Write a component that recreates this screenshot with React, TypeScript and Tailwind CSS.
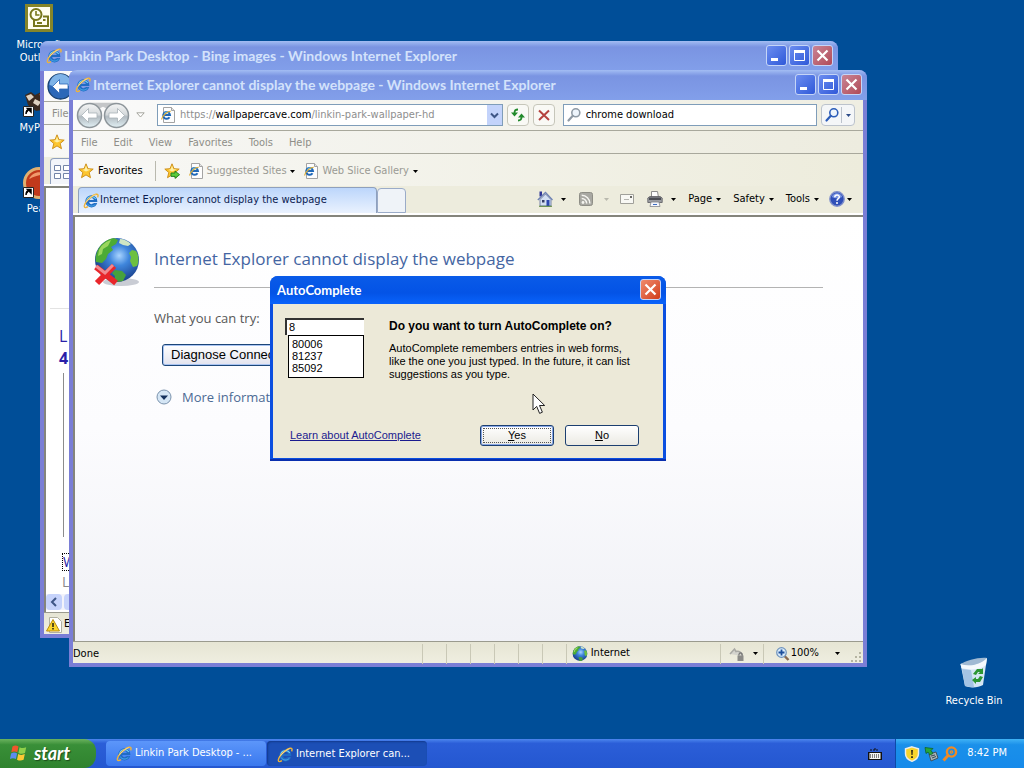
import React from "react";

const TAHOMA = "font-['DejaVu_Sans_Condensed','DejaVu_Sans',sans-serif]";
const TREBUCHET = "font-['Lato',sans-serif]";
const SANS = "font-['Liberation_Sans',sans-serif]";
const SEGOE = "font-['Open_Sans',sans-serif]";

const IeIcon: React.FC<{ className?: string }> = ({ className = "size-4" }) => (
  <svg viewBox="0 0 16 16" className={`shrink-0 ${className}`}>
    <path
      d="M8.400 2.200a6 6 0 0 1 6 6.800H6.200c.3 1.500 1.100 2.200 2.400 2.200 1 0 1.700-.4 2.100-1.200h3.500c-.8 2.800-2.800 4.400-5.800 4.400a6.100 6.100 0 1 1 0-12.200zM6.200 7h4.600c-.2-1.300-1-2-2.300-2S6.400 5.700 6.200 7z"
      fill="#1f6cc4"
      fillRule="evenodd"
    />
    <path d="M3.600 8a5 5 0 0 1 9.200-2" fill="none" stroke="#74d0f7" strokeWidth="1.100" />
    <path d="M4.200 10.500c1.500 3.200 6 3.400 8.200.7" fill="none" stroke="#4fb4ee" strokeWidth=".9" />
    <path
      d="M14.600 4.400c1-2.300.3-3.500-1.600-3.100C10 2 5 6 2.700 9.600 1 12.300.8 14.400 2.400 14.600c.7.100 1.600-.3 2.500-.9"
      fill="none"
      stroke="#eeb33a"
      strokeWidth="1.400"
    />
    <path d="M12.600 1.700C9.500 2.600 5.200 6.200 3 9.400" fill="none" stroke="#fff0b8" strokeWidth=".6" />
  </svg>
);

const PageIcon: React.FC = () => (
  <svg viewBox="0 0 16 16" className="size-4 shrink-0" fill="none">
    <path d="M3.500.5h8l3 3v12h-11z" fill="#fdfdfd" stroke="#a3a3a3" />
    <path d="M11.500.5v3h3" fill="#e4e4e4" stroke="#a3a3a3" />
    <path d="M9.500 10.200A3.400 3.400 0 1 1 10 8H4" stroke="#1f68b8" strokeWidth="2" />
    <path d="M4 6.700a3.500 3.500 0 0 1 4.500-1.500" stroke="#74d0f7" strokeWidth=".9" />
    <path d="M10.800 4.200C8 4 2.800 7.800 1.500 12.500" stroke="#dfb03a" strokeWidth="1.100" />
  </svg>
);

const StarIcon: React.FC<{ arrow?: boolean }> = ({ arrow }) => (
  <svg viewBox="0 0 16 16" className="size-4 shrink-0">
    <path
      d="M8 .8l2 4.900 5.200.4-4 3.400 1.300 5.200L8 11.900l-4.500 2.800 1.300-5.200-4-3.400L6 5.700z"
      fill="#fdc62f"
      stroke="#c98a13"
      strokeWidth=".9"
      strokeLinejoin="round"
    />
    <path d="M8 2.500l1.300 3.800 3.500.3L8 8.500 4.500 6.800l2.200-.5z" fill="#fff0a3" />
    {arrow && (
      <path d="M7 10h4V8l4.600 3.700L11 15.400v-2H7z" fill="#5ccb3b" stroke="#187a1c" strokeWidth=".9" />
    )}
  </svg>
);

const Caret: React.FC<{ className?: string }> = ({ className = "text-black" }) => (
  <svg viewBox="0 0 5 3" className={`h-[3px] w-[5px] shrink-0 ${className}`}>
    <path d="M0 0h5L2.500 3z" fill="currentColor" />
  </svg>
);

const HomeIcon: React.FC = () => (
  <svg viewBox="0 0 16 16" className="size-4">
    <path d="M2.500.5h2.500v5H2.500z" fill="#2f3596" />
    <path d="M3 8.500L8.500 3l5.500 5.500V15H3z" fill="#d3dff2" stroke="#5a6a9c" strokeWidth=".8" />
    <path d="M.8 9L8.500 1.500 15.500 9" fill="none" stroke="#6f83b4" strokeWidth="1.300" />
    <path d="M5 9h2.500v2.500H5z" fill="#333c66" />
    <path d="M9.500 9h3v6h-3z" fill="#2c48b0" />
    <path d="M2 15.300h13" stroke="#5c8a3a" />
  </svg>
);

const RssIcon: React.FC = () => (
  <svg viewBox="0 0 16 16" className="size-4" fill="none">
    <rect x="1.500" y="1.500" width="13" height="13" rx="2" fill="#a8a8a2" stroke="#8e8e86" />
    <circle cx="5" cy="11.500" r="1.400" fill="#f5f5f0" />
    <path d="M3.700 7.500a5 5 0 0 1 5 5M3.700 4.300a8.200 8.200 0 0 1 8.200 8.200" stroke="#f5f5f0" strokeWidth="1.500" />
  </svg>
);

const MailIcon: React.FC = () => (
  <svg viewBox="0 0 16 16" className="size-4" fill="none">
    <path d="M1.500 3.500h13v9h-13z" fill="#f8f8f4" stroke="#a0a09a" />
    <path d="M5 8.500h5" stroke="#b5b5b0" />
    <path d="M11 5h2v2h-2z" fill="#6a6a66" />
  </svg>
);

const PrinterIcon: React.FC = () => (
  <svg viewBox="0 0 16 16" className="size-4">
    <path d="M4.500.5h6l1 6h-7z" fill="#fdfdfd" stroke="#8d8d8d" />
    <path d="M.8 7l2-1.500h10.400l2 1.500v4.500H.8z" fill="#9c9ea3" stroke="#5a5b60" strokeWidth=".8" />
    <path d="M2 6.500h12v2.500H2z" fill="#4b4d54" />
    <path d="M4 11h8l1 4.500H3z" fill="#f4f6fb" stroke="#84868c" strokeWidth=".8" />
    <path d="M6 13.500h4" stroke="#3f6fc4" strokeWidth="1.200" />
  </svg>
);

const HelpIcon: React.FC = () => (
  <svg viewBox="0 0 16 16" className="size-4" fill="none">
    <circle cx="8" cy="8" r="7.200" fill="#2f4fb8" stroke="#7f8fcb" strokeWidth="1.400" />
    <path d="M2.800 6a5.500 5.500 0 0 1 10.400 0C10 7.800 6 7.800 2.800 6z" fill="#7b96e2" />
    <path d="M5.800 6.200c0-3 4.500-2.800 4.500-.3C10.300 7.700 8 7.600 8 9.700" stroke="#fff" strokeWidth="1.500" />
    <circle cx="8" cy="12" r="1" fill="#fff" />
  </svg>
);

const MagnifierIcon: React.FC<{ className: string }> = ({ className }) => (
  <svg viewBox="0 0 16 16" className={`size-4 shrink-0 ${className}`} fill="none">
    <circle cx="9.800" cy="5.800" r="4" fill="#eef5fc" stroke="currentColor" strokeWidth="1.600" />
    <path d="M6.800 8.800L2.500 13.500" stroke="currentColor" strokeWidth="2.200" strokeLinecap="round" />
  </svg>
);

const GlobeShapes: React.FC = () => (
  <>
    <defs>
      <radialGradient id="ocean" cx=".55" cy=".4" r=".65">
        <stop offset="0" stopColor="#a9d4ff" />
        <stop offset=".35" stopColor="#3f86dc" />
        <stop offset="1" stopColor="#12347f" />
      </radialGradient>
    </defs>
    <circle cx="24" cy="23" r="22" fill="url(#ocean)" />
    <path d="M4 15C7 7 14 2 21 1l4 2-2 4-5 3 2 3-5 4-2 5-4 4-6-1c-1-4 0-7 1-10z" fill="#4cab35" />
    <path d="M6 13c3-6 8-9 12-10l-3 6-5 3-1 5-4 2z" fill="#9ad65e" />
    <path d="M27 2c4 0 8 2 11 5l-3 2-5-1-4-2z" fill="#cfe6c4" />
    <path d="M39 13l4 1c3 4 3 11 1 15l-4 1-3-6 1-4-2-4z" fill="#6cc040" />
    <path d="M22 33l7 1 4 4-3 6c-4 1-7 1-9 0l1-5-3-3z" fill="#47a13c" />
  </>
);

const BackIcon: React.FC = () => (
  <svg viewBox="0 0 27 27" className="size-[27px]">
    <circle cx="13.500" cy="13.500" r="12.500" fill="#2c68b8" stroke="#18406f" strokeWidth="1.300" />
    <path d="M2.500 12a11 11 0 0 1 22 0c-6 2-16 2-22 0z" fill="#7fb4e8" />
    <path d="M12.500 6.500L5.500 13.500l7 7v-4.500h8.500v-5h-8.500z" fill="#fff" stroke="#2c68b8" strokeWidth=".8" />
  </svg>
);

const TravelCircle: React.FC<{ flip?: boolean }> = ({ flip }) => (
  <svg viewBox="0 0 27 27" className={`size-[27px] ${flip ? "-scale-x-100" : ""}`}>
    <defs>
      <linearGradient id="glass" x1="0" y1="0" x2="0" y2="1">
        <stop offset="0" stopColor="#f4f5f5" />
        <stop offset=".45" stopColor="#d6dadc" />
        <stop offset=".55" stopColor="#b2bbc1" />
        <stop offset="1" stopColor="#e2f0f5" />
      </linearGradient>
    </defs>
    <path d="M14 .8h13v4l-4 2z" fill="#c4c6c8" />
    <circle cx="13.500" cy="13.500" r="12" fill="url(#glass)" stroke="#8d959a" strokeWidth="1.500" />
    <path
      d="M12.500 6.500L5.500 13.500l7 7v-4.500h8.500v-5h-8.500z"
      fill="#fff"
      stroke="#a9b2b7"
      strokeWidth=".8"
      strokeLinejoin="round"
    />
  </svg>
);

const captionButton =
  "flex size-[21px] items-center justify-center rounded-[3px] border border-[#c5d5f7] text-white";

const CloseButton: React.FC<{ className: string }> = ({ className }) => (
  <button type="button" aria-label="Close" className={`${captionButton} ${className}`}>
    <svg viewBox="0 0 19 19" className="size-[19px]">
      <path d="M4.500 4.500l10 10M14.500 4.500l-10 10" stroke="#fff" strokeWidth="2.200" />
    </svg>
  </button>
);

const CaptionButtons: React.FC = () => (
  <div className="flex gap-0.5">
    <button type="button" aria-label="Minimize" className={`${captionButton} bg-linear-to-br from-[#6c8df0] to-[#3058d8]`}>
      <svg viewBox="0 0 19 19" className="size-[19px]">
        <path d="M4 12h7v3H4z" fill="#fff" />
      </svg>
    </button>
    <button type="button" aria-label="Maximize" className={`${captionButton} bg-linear-to-br from-[#6c8df0] to-[#3058d8]`}>
      <svg viewBox="0 0 19 19" className="size-[19px]">
        <path d="M4.500 5v9.500h10V5" fill="none" stroke="#fff" />
        <path d="M4 4h11v3H4z" fill="#fff" />
      </svg>
    </button>
    <CloseButton className="bg-linear-to-br from-[#c98496] to-[#b04a58]" />
  </div>
);

type BrowserWindowProps = {
  title: string;
  place: string;
  menus: string[];
  toolbar: React.ReactNode;
  favorites: React.ReactNode;
  tabs: React.ReactNode;
  status: React.ReactNode;
  children: React.ReactNode;
};

const BrowserWindow: React.FC<BrowserWindowProps> = ({ title, place, menus, toolbar, favorites, tabs, status, children }) => (
  <section className={`absolute ${place} flex flex-col overflow-hidden rounded-t-lg bg-[#7a7ed6] px-1 pb-1`}>
    <header className="-mx-1 flex h-[30px] shrink-0 items-center gap-0.5 bg-linear-to-b from-[#a3bdf3] via-[#7a94e2] via-20% to-[#829fea] pr-[5px] pb-px pl-1.5">
      <IeIcon />
      <h2 className={`flex-1 truncate pt-px text-sm font-bold text-[#d3e2fb] ${TREBUCHET}`}>{title}</h2>
      <CaptionButtons />
    </header>
    <div className="flex min-h-0 flex-1 flex-col bg-[#eeeddf]">
      <div className="flex h-[31px] shrink-0 items-center border-b border-[#a8a89c] bg-linear-to-r from-[#fafafa] to-[#efeee2] pr-2 pl-[3px]">
        {toolbar}
      </div>
      <nav className="flex h-[23px] shrink-0 items-center gap-4 border-b border-[#a8a89c] bg-linear-to-r from-[#f7f7f5] to-[#edecdf] pt-[3px] pl-2 text-[#8e8e88]">
        {menus.map((m) => (
          <button type="button" key={m}>
            {m}
          </button>
        ))}
      </nav>
      <div className="flex h-8 shrink-0 items-center bg-linear-to-r from-[#f8f8f6] to-[#edecdc] pt-0.5 pl-[5px]">
        {favorites}
      </div>
      {tabs}
      <main className="relative min-h-0 flex-1 overflow-hidden border-t-2 border-l-2 border-[#85857c] bg-white">
        {children}
      </main>
      <footer className="flex h-[22px] shrink-0 items-center border-t border-[#9a9a8e] bg-linear-to-b from-[#e6e5d4] to-[#efeee0] pt-0.5">
        {status}
      </footer>
    </div>
  </section>
);

const AddressBar: React.FC = () => (
  <>
    <button type="button" aria-label="Back">
      <TravelCircle />
    </button>
    <button type="button" aria-label="Forward">
      <TravelCircle flip />
    </button>
    <svg viewBox="0 0 9 6" className="ml-1.5 h-1.5 w-[9px] shrink-0">
      <path d="M.8.8h7.400L4.500 5z" fill="#fff" stroke="#a5a59e" />
    </svg>
    <div className="ml-3 flex h-[22px] flex-[348] items-center gap-1 border border-[#7f9db9] bg-white pl-0.5">
      <PageIcon />
      <p className="flex-1 truncate pt-px text-[#8e8e8e]">
        https://<span className="text-black">wallpapercave.com</span>/linkin-park-wallpaper-hd
      </p>
      <button type="button" aria-label="Show addresses" className="flex h-full w-[15px] items-center justify-center bg-[#c3d3fb]">
        <svg viewBox="0 0 9 7" className="h-[7px] w-[9px]">
          <path d="M1 1.500l3.500 3.500L8 1.500" fill="none" stroke="#3e5686" strokeWidth="2" />
        </svg>
      </button>
    </div>
    <button type="button" aria-label="Refresh" className="ml-1 flex size-[22px] items-center justify-center rounded-sm border border-[#c6c6ba] bg-[#f9f9f5]">
      <svg viewBox="0 0 16 16" className="size-4" fill="none" stroke="#228a2c" strokeWidth="1.800">
        <path d="M8 2.500C5.500 2.500 4.500 3.500 4.500 6" />
        <path d="M8 13.500c2.500 0 3.500-1 3.500-3.500" />
        <path d="M1 5.500h7L4.500 9.500zM8 10.500h7L11.500 6.500z" fill="#228a2c" stroke="none" />
      </svg>
    </button>
    <button type="button" aria-label="Stop" className="ml-1 flex size-[22px] items-center justify-center rounded-sm border border-[#c6c6ba] bg-[#f9f9f5]">
      <svg viewBox="0 0 16 16" className="size-4">
        <path d="M3 3.500l10 9.500M13 3.500L3 13" stroke="#b5433f" strokeWidth="2" />
      </svg>
    </button>
    <label className="ml-2 flex h-[22px] flex-[255] items-center gap-1 border border-[#7f9db9] bg-white pl-0.5">
      <MagnifierIcon className="text-[#8f9aa5]" />
      <input aria-label="Search" defaultValue="chrome download" className="min-w-0 flex-1 text-black outline-none" />
    </label>
    <div className="ml-1 flex h-[22px] items-center rounded-sm border border-[#bcc3cc] bg-[#f4f6f8]">
      <button type="button" aria-label="Run search" className="flex w-5 justify-center border-r border-[#bcc3cc]">
        <MagnifierIcon className="text-[#2b5cb8]" />
      </button>
      <button type="button" aria-label="Search options" className="flex w-3 justify-center">
        <Caret className="text-[#2b4a88]" />
      </button>
    </div>
  </>
);

const FavoritesBar: React.FC = () => (
  <>
    <button type="button" className="flex items-center gap-1">
      <StarIcon />
      Favorites
    </button>
    <span className="mr-2 ml-3 h-5 w-px bg-[#b9b9ae]" />
    <button type="button" aria-label="Add to Favorites Bar">
      <StarIcon arrow />
    </button>
    <button type="button" className="ml-2 flex items-center gap-[3px] text-[#9a9a94]">
      <PageIcon />
      Suggested Sites
      <Caret />
    </button>
    <button type="button" className="ml-2 flex items-center gap-1 text-[#9a9a94]">
      <PageIcon />
      Web Slice Gallery
      <Caret />
    </button>
  </>
);

const CommandBar: React.FC = () => (
  <div className="mb-px ml-auto flex items-center self-center pr-[11px]">
    <button type="button" aria-label="Home" className="flex items-center gap-2">
      <HomeIcon />
      <Caret />
    </button>
    <button type="button" aria-label="Feeds" className="ml-3 flex items-center gap-2.5">
      <RssIcon />
      <Caret className="text-[#b9b9ae]" />
    </button>
    <button type="button" aria-label="Read mail" className="ml-2.5">
      <MailIcon />
    </button>
    <button type="button" aria-label="Print" className="ml-3 flex items-center gap-2">
      <PrinterIcon />
      <Caret />
    </button>
    {["Page", "Safety", "Tools"].map((label) => (
      <button type="button" key={label} className="ml-3 flex items-center gap-1">
        {label}
        <Caret />
      </button>
    ))}
    <button type="button" aria-label="Help" className="ml-2.5 flex items-center gap-0.5">
      <HelpIcon />
      <Caret />
    </button>
  </div>
);

const FrontTabs: React.FC = () => (
  <div className="flex h-[29px] shrink-0 items-end border-b-2 border-white bg-[#edecdd] pl-[5px]">
    <button
      type="button"
      className="flex h-[26px] w-[299px] items-center gap-px rounded-t-sm border border-b-0 border-[#8fa0bd] bg-linear-to-b from-[#bcd6fb] to-[#eaf2fe] pl-1 text-left text-[#0c1c50]"
    >
      <IeIcon />
      Internet Explorer cannot display the webpage
    </button>
    <button type="button" aria-label="New Tab" className="h-[25px] w-[29px] rounded-t-sm border border-[#9aabc8] bg-[#eff3f8]" />
    <CommandBar />
  </div>
);

const FrontStatus: React.FC = () => (
  <>
    <span className="flex-1 pt-px">Done</span>
    {[0, 1, 2, 3, 4, 5].map((i) => (
      <span key={i} className="h-5 w-6 border-l border-[#c9c8b6]" />
    ))}
    <span className="flex h-5 w-[154px] items-center gap-[3px] border-l border-[#c9c8b6] pl-[5px]">
      <svg viewBox="0 0 48 48" className="size-4">
        <GlobeShapes />
      </svg>
      Internet
    </span>
    <span className="flex h-5 w-[43px] items-center gap-2 border-l border-[#c9c8b6] pl-2">
      <svg viewBox="0 0 16 16" className="size-4" fill="none">
        <path d="M1 8l4.500-5 1.500 2.500c3-1 6 1 6.500 4.500" fill="#d4d4ce" stroke="#a9a9a4" strokeWidth="1.500" />
        <path d="M8.500 9.500h6V15h-6z" fill="#8b8b88" />
        <path d="M9.800 9.500c0-3.500 3.400-3.500 3.400 0" stroke="#777" strokeWidth="1.200" />
      </svg>
      <Caret />
    </span>
    <span className="flex h-5 items-center border-l border-[#c9c8b6] pl-[11px]">
      <svg viewBox="0 0 16 16" className="size-4" fill="none">
        <path d="M9 9.500l4.500 4.500" stroke="#8a6a50" strokeWidth="2.400" />
        <circle cx="6.500" cy="6.500" r="4.800" fill="#d9ebfb" stroke="#6f93bd" strokeWidth="1.200" />
        <path d="M6.500 3.500v6M3.500 6.500h6" stroke="#1d4f9c" strokeWidth="1.800" />
      </svg>
      100%
      <Caret className="mr-2.5 ml-4" />
    </span>
    <svg viewBox="0 0 12 12" className="mr-px size-3 self-end" fill="#b5b4a2">
      <path d="M9 1h2v2H9zM9 5h2v2H9zM9 9h2v2H9zM5 5h2v2H5zM5 9h2v2H5zM1 9h2v2H1z" />
    </svg>
  </>
);

const ErrorPage: React.FC = () => (
  <div className={`flex h-full items-start bg-linear-to-b from-white via-[#fcfcfe] to-[#f0f1f6] pt-5 pr-10 pl-[18px] ${SEGOE}`}>
    <svg viewBox="0 0 48 50" className="h-[50px] w-12 shrink-0">
      <ellipse cx="28" cy="45" rx="18" ry="4" fill="#c9ccd4" />
      <GlobeShapes />
      <path d="M3 30l20 16M21 29L4 46" stroke="#e9262b" strokeWidth="6" />
      <path d="M3 29l9 7 8-8" fill="none" stroke="#f08a90" strokeWidth="3" />
    </svg>
    <div className="ml-[13px] flex-1">
      <h1 className="border-b border-[#b3b3b3] pt-2 pb-[15px] text-[17px] leading-[27px] text-[#4465a2]">
        Internet Explorer cannot display the webpage
      </h1>
      <p className="mt-5 text-[13px] leading-5 text-[#575757]">What you can try:</p>
      <button
        type="button"
        className={`mt-4 ml-2 h-[22px] rounded-[3px] border border-[#1c4678] bg-linear-to-b from-white to-[#e2e3ee] px-2 text-[13px] text-black shadow-[inset_0_0_0_1px_#a9c4f2] ${SANS}`}
      >
        Diagnose Connection
      </button>
      <button type="button" className="mt-[21px] ml-0.5 flex items-center gap-2.5 text-[13px] leading-5 text-[#4c6a94]">
        <svg viewBox="0 0 16 16" className="size-4">
          <circle cx="8" cy="8" r="7" fill="#d5e6f5" stroke="#7b93ad" />
          <path d="M4 6.500h8L8 11z" fill="#14305c" />
        </svg>
        More information
      </button>
    </div>
  </div>
);

const dialogButton =
  "h-[21px] w-[74px] rounded-[3px] border border-[#1c3f70] bg-linear-to-b from-white to-[#ebeae3] text-black";

const AutoCompleteDialog: React.FC = () => (
  <div
    role="dialog"
    aria-labelledby="ac-title"
    className={`w-[396px] overflow-hidden rounded-t-lg border-b-2 border-[#0a2fae] bg-[#0b4fe0] px-[3px] pb-px text-[11px] text-black ${SANS}`}
  >
    <header className="-mx-[3px] flex h-[28px] items-center justify-between bg-linear-to-b from-[#0a5be8] via-[#0453e6] via-60% to-[#0a63fb] pr-[5px] pl-[7px]">
      <h2 id="ac-title" className={`pt-[3px] text-[13px] font-bold text-white ${TREBUCHET}`}>
        AutoComplete
      </h2>
      <CloseButton className="bg-linear-to-br from-[#f08a6c] to-[#d03a14]" />
    </header>
    <div className="bg-[#ece9d8] px-3 pb-3">
      <div className="flex pt-3.5">
        <div className="w-[79px]">
          <input
            aria-label="Entry"
            defaultValue="8"
            className="block h-[17px] w-full border-t-2 border-l-2 border-[#333] bg-white pl-0.5 outline-none"
          />
          <ul className="ml-[3px] border border-black bg-white pt-0.5 pb-[3px] pl-[3px] leading-3">
            <li>80006</li>
            <li>81237</li>
            <li>85092</li>
          </ul>
        </div>
        <div className="ml-[25px]">
          <h3 className="text-xs leading-4 font-bold">Do you want to turn AutoComplete on?</h3>
          <p className="mt-2 w-[245px] leading-[13px]">
            AutoComplete remembers entries in web forms,
            <br />
            like the one you just typed. In the future, it can list
            <br />
            suggestions as you type.
          </p>
        </div>
      </div>
      <div className="mt-11 flex items-center pl-[5px]">
        <a href="#learn" className="flex-1 text-[#1b1b8f] underline">
          Learn about AutoComplete
        </a>
        <button type="button" className={`${dialogButton} p-0.5 shadow-[inset_0_0_0_1px_#8aa9e8]`}>
          <span className="flex h-full items-center justify-center border border-dotted border-[#555]">
            <span>
              <u>Y</u>es
            </span>
          </span>
        </button>
        <button type="button" className={`${dialogButton} mr-3 ml-[11px]`}>
          <u>N</u>o
        </button>
      </div>
    </div>
  </div>
);

const OutlookIcon: React.FC = () => (
  <svg viewBox="0 0 28 28" className="mb-[3px] size-7" fill="none">
    <path d="M1.500 1.500h25v25h-25z" fill="#fffef0" stroke="#85852a" strokeWidth="3" />
    <circle cx="11" cy="10.500" r="5.500" stroke="#77771c" strokeWidth="2" />
    <path d="M11 7v4h3.500" stroke="#77771c" strokeWidth="1.600" />
    <path d="M9 16v6h14v-9.500h-5" stroke="#77771c" strokeWidth="2" />
    <path d="M18 16h2.500M12 19h5" stroke="#77771c" strokeWidth="2" />
  </svg>
);

const Shortcut: React.FC = () => (
  <g>
    <path d="M.5 20.500h10v10H.5z" fill="#fff" stroke="#222" />
    <path d="M3 28c0-3 1-4.500 3.500-4.500M4.500 22.500H8V26z" stroke="#000" strokeWidth="1.500" fill="#000" />
  </g>
);

const DesktopIcon: React.FC<{ label: string; place: string; children: React.ReactNode }> = ({ label, place, children }) => (
  <button type="button" className={`absolute ${place} flex w-[78px] flex-col items-center gap-[3px] leading-[13px] text-white`}>
    {children}
    <span className="whitespace-pre">{label}</span>
  </button>
);

const TaskButton: React.FC<{ label: string; active?: boolean }> = ({ label, active }) => (
  <button
    type="button"
    className={`flex h-[25px] w-40 items-center gap-[3px] rounded-sm pl-2.5 text-white ${
      active ? "bg-[#1c4fb6] pt-0.5 shadow-[inset_1px_1px_2px_#123a8c]" : "bg-linear-to-b from-[#5c96fa] to-[#3a78ee]"
    }`}
  >
    <IeIcon />
    {label}
  </button>
);

const Taskbar: React.FC = () => (
  <footer className="flex h-[29px] shrink-0 items-stretch bg-linear-to-b from-[#4d86ee] via-[#2b5ed8] via-15% to-[#2457d0]">
    <button
      type="button"
      className={`flex w-24 items-center gap-1.5 rounded-r-xl bg-linear-to-b from-[#6ab35e] via-[#398f38] via-20% to-[#2f832e] pb-0.5 pl-2.5 text-lg font-bold text-white italic text-shadow-[1px_1px_1px_#1c4d1a] ${TREBUCHET}`}
    >
      <svg viewBox="0 0 18 18" className="size-[18px]">
        <path d="M2.500 2.500C4.500 1.300 6.500 1.300 8.500 2.600L7.300 8.300C5.300 7.100 3.300 7.100 1.300 8.200z" fill="#f0562c" />
        <path d="M9.600 3.200c2.200 1.200 4.300 1.200 6.600.1L15 9c-2.300 1.100-4.400 1-6.600-.1z" fill="#8fd04a" />
        <path d="M1.100 9.400c2-1.200 4-1.200 6 0l-1.200 5.700c-2-1.200-4-1.200-6 0z" fill="#5c8cf0" />
        <path d="M8.200 10c2.200 1.200 4.300 1.200 6.600.1l-1.200 5.700c-2.300 1.100-4.400 1-6.600-.1z" fill="#fbc934" />
      </svg>
      start
    </button>
    <div className="flex flex-1 items-center gap-px pl-2.5">
      <TaskButton label="Linkin Park Desktop - ..." />
      <TaskButton label="Internet Explorer can..." active />
      <svg viewBox="0 0 14 14" className="mr-[13px] ml-auto size-3.5">
        <path d="M2 3h9M7 3V1" stroke="#111" strokeDasharray="2 1" />
        <path d="M0 5h14v8H0z" fill="#111" />
        <path d="M1.500 6h11v6h-11z" fill="#f4f4f4" />
        <path d="M2 8h10M2 10h10" stroke="#111" strokeDasharray="1 1" />
      </svg>
    </div>
    <div className="flex items-center gap-[3px] border-l border-[#0d4aa8] bg-linear-to-b from-[#3fb2f5] via-[#1a90ea] via-20% to-[#168aea] pr-[17px] pl-2 text-white">
      <svg viewBox="0 0 16 16" className="size-4">
        <path d="M8 .8l6.500 2v5c0 4-2.800 6.200-6.500 7.500C4.300 14 1.500 11.800 1.500 7.800v-5z" fill="#f7d42c" stroke="#ececec" strokeWidth="1.400" />
        <path d="M7.200 4h1.600l-.3 5h-1zM7.200 10.300h1.600V12H7.200z" fill="#111" />
      </svg>
      <svg viewBox="0 0 16 16" className="size-4">
        <path d="M6 8l7-2 2 6-7 3z" fill="#a8b4b8" stroke="#3d4a50" strokeWidth=".9" />
        <path d="M2 1.500l8 1-2 2 2 3-3 1.500-2-3-2 1.500z" fill="#27a63a" stroke="#0b5c1c" strokeWidth=".7" />
        <path d="M8 10l4-1M9 12l4-1.500" stroke="#3d4a50" />
      </svg>
      <svg viewBox="0 0 16 16" className="size-4" fill="none" stroke="#f08a24">
        <circle cx="9.500" cy="6" r="4.600" strokeWidth="2.400" />
        <circle cx="9.500" cy="6" r="1.200" strokeWidth="1.200" />
        <path d="M6 9.500L1.500 14.500" strokeWidth="3" />
      </svg>
      <time className="ml-1.5">8:42 PM</time>
    </div>
  </footer>
);

export default function App() {
  return (
    <div className={`flex h-screen min-h-[600px] flex-col overflow-hidden bg-[#004e98] text-[11px] text-black ${TAHOMA}`}>
      <div className="relative flex-1">
        <DesktopIcon label={"Microsoft\nOutlook"} place="top-1 left-0">
          <OutlookIcon />
        </DesktopIcon>
        <DesktopIcon label="MyPaint" place="top-[86px] left-0">
          <svg viewBox="0 0 32 32" className="size-8" fill="none">
            <path d="M2 9l6-3 4 3 8-4 8 6-3 12-12 2-8-6z" fill="#3b2a1f" />
            <path d="M3 10l5-2 3 3-5 4zM12 13l6 3-3 4-5-3z" fill="#e0d2c0" />
            <path d="M16 8l8 3-3 6z" fill="#b0552a" />
            <Shortcut />
          </svg>
        </DesktopIcon>
        <DesktopIcon label="Pearl" place="top-[167px] left-0">
          <svg viewBox="0 0 32 32" className="size-8" fill="none">
            <circle cx="16" cy="16" r="14.500" fill="#c13a1c" stroke="#e0b070" strokeWidth="3" />
            <path d="M6 12c3-7 12-9 18-4-6-1-12 1-18 4z" fill="#f09a6c" />
            <Shortcut />
          </svg>
        </DesktopIcon>
        <DesktopIcon label="Recycle Bin" place="right-[11px] bottom-8">
          <svg viewBox="0 0 32 32" className="mb-0.5 size-8">
            <path d="M2.500 7L16 3l13-2-4 27c-5 3-13 3-18 1z" fill="#d5e6f4" />
            <path d="M2.500 7C11 10 21 8 29 1l-1 7C20 14 10 13 3.500 11z" fill="#f4f9fd" />
            <path d="M2.500 7C8 4 20 0 29 1c-7 7-18 9-26.500 6z" fill="#9fb9d3" />
            <path d="M4 12l3 17c3 1 6 1.500 9 1L13 13z" fill="#a5c4e4" />
            <path d="M15 17l4-5h5l1-1v6h-5l2-2h-2l-2 3zM25 20l-3 5h-4v2l-4-4 4-3v2h2l2-3z" fill="#2c9632" />
          </svg>
        </DesktopIcon>

        <BrowserWindow
          title="Linkin Park Desktop - Bing images - Windows Internet Explorer"
          place="top-[41px] right-[186px] bottom-[101px] left-10"
          menus={["File"]}
          toolbar={<BackIcon />}
          favorites={<StarIcon />}
          tabs={
            <div className="flex h-[29px] shrink-0 items-end border-b-2 border-white pl-1.5">
              <div className="flex h-[26px] w-10 items-center rounded-t-sm border border-b-0 border-[#8fa0bd] bg-[#f3f5fa] pl-[3px]">
                <svg viewBox="0 0 16 14" className="h-3.5 w-4" fill="#fff" stroke="#7384a8">
                  <path d="M.5.5h6v5h-6zM9.500.5h6v5h-6zM.5 8.500h6v5h-6zM9.500 8.500h6v5h-6z" />
                </svg>
              </div>
            </div>
          }
          status={
            <div className="flex items-center gap-0.5 pl-0.5">
              <svg viewBox="0 0 16 16" className="size-4">
                <path d="M3.500.5h8l4 4v11h-12z" fill="#fff" stroke="#b0b0a0" />
                <path d="M7 2.500L13.500 14H.5z" fill="#fbd52c" stroke="#b98c10" />
                <path d="M6.300 6h1.400v4H6.300zM6.300 11h1.400v1.500H6.300z" fill="#111" />
              </svg>
              Error
            </div>
          }
        >
          <div className={`flex h-full flex-col text-base ${SEGOE}`}>
            <div className="mt-[120px] ml-1 border-t border-[#e3e3e3]" />
            <div className="mt-4 ml-[13px] leading-[22px] text-[#2a1fa8]">
              <p>L</p>
              <p className="font-bold">4</p>
            </div>
            <div className="mt-1 ml-[17px] h-[164px] border-l border-[#8c8c8c]" />
            <div className="mt-auto ml-4 text-sm leading-5">
              <p className="inline-block border border-dotted border-black leading-4 text-[#2a1fa8]">W</p>
              <p className="text-[#8a8a8a]">L</p>
            </div>
            <div className="mt-0.5 mb-0.5 flex h-4 shrink-0 gap-0.5 bg-[#f3f3fa]">
              <button type="button" aria-label="Scroll left" className="flex w-4 items-center justify-center rounded-sm bg-[#c6d3fb]">
                <svg viewBox="0 0 8 10" className="h-2.5 w-2">
                  <path d="M6 1L2 5l4 4" fill="none" stroke="#3e5686" strokeWidth="2" />
                </svg>
              </button>
              <div className="flex-1 rounded-sm bg-[#c6d3fb]" />
            </div>
          </div>
        </BrowserWindow>

        <BrowserWindow
          title="Internet Explorer cannot display the webpage - Windows Internet Explorer"
          place="top-[70px] right-[157px] bottom-[72px] left-[69px]"
          menus={["File", "Edit", "View", "Favorites", "Tools", "Help"]}
          toolbar={<AddressBar />}
          favorites={<FavoritesBar />}
          tabs={<FrontTabs />}
          status={<FrontStatus />}
        >
          <ErrorPage />
        </BrowserWindow>

        <div className="absolute top-[70px] right-[157px] bottom-[73px] left-[69px] flex items-center justify-center">
          <AutoCompleteDialog />
          <svg viewBox="0 0 14 22" className="absolute top-[323px] left-[463px] h-[22px] w-3.5">
            <path d="M1 1v16l3.700-3.600 2.900 7 2.800-1.200-2.900-6.700h5.200z" fill="#fff" stroke="#222" />
          </svg>
        </div>
      </div>
      <Taskbar />
    </div>
  );
}
